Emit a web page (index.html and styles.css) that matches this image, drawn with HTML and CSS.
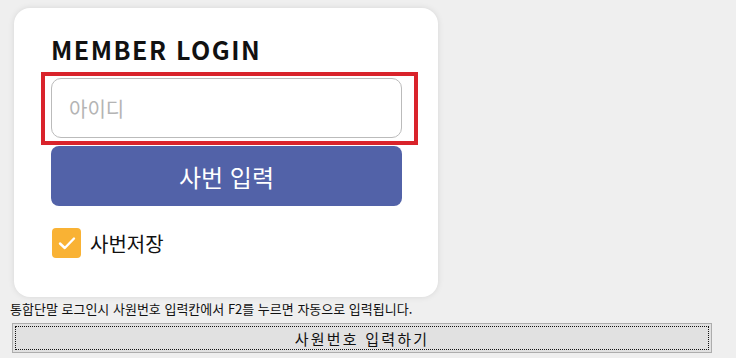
FILE: index.html
```html
<!DOCTYPE html>
<html lang="ko">

<head>
    <meta charset="UTF-8">
    <meta name="viewport" content="width=device-width, initial-scale=1.0">
    <title>Member Login</title>
    <link rel="stylesheet" href="styles.css">
</head>

<body>
    <!-- Login Card -->
    <div class="card">
        <h2 class="card-title">MEMBER LOGIN</h2>
        <div class="highlight">
            <input type="text" class="id-input" placeholder="아이디">
        </div>
        <button class="submit-btn">사번 입력</button>
        <label class="save-row">
            <span class="check-box">
                <svg width="18" height="14" viewBox="0 0 18 14">
                    <path d="M2 7.5 L6.8 12 L16 2.5" fill="none" stroke="#fff" stroke-width="2.4" stroke-linecap="round" stroke-linejoin="round" />
                </svg>
            </span>
            사번저장
        </label>
    </div>

    <p class="notice">통합단말 로그인시 사원번호 입력칸에서 F2를 누르면 자동으로 입력됩니다.</p>
    <button class="fill-btn">사원번호 입력하기</button>
</body>

</html>
```

FILE: styles.css
```css
body {
    font-family: "Noto Sans CJK KR", "Noto Sans", sans-serif;
    background-color: #efefef;
    margin: 0;
    padding: 0;
}

.card {
    background-color: #fff;
    border-radius: 16px;
    box-shadow: 0 0 6px rgba(0, 0, 0, 0.1);
    margin: 8px 0 0 14px;
    width: 424px;
    height: 289px;
    box-sizing: border-box;
    padding: 24px 36px 0 37px;
}

.card-title {
    font-size: 25px;
    font-weight: bold;
    letter-spacing: 1.5px;
    color: #111;
    margin: 0 0 6px;
    line-height: 34px;
}

/* red box around the id field */
.highlight {
    margin: 0 -16px 0 -10px;
    padding: 2px 12px 3px 6px;
    border: 4px solid #d9232b;
}

.id-input {
    display: block;
    width: 100%;
    height: 60px;
    box-sizing: border-box;
    border: 1px solid #bbb;
    border-radius: 10px;
    padding: 0 17px;
    font-family: inherit;
    font-size: 20px;
    color: #333;
}

.id-input::placeholder {
    color: #b4b4b4;
}

.submit-btn {
    display: block;
    width: 100%;
    height: 60px;
    margin-top: 1px;
    border: none;
    border-radius: 8px;
    background-color: #5262a8;
    color: #fff;
    font-family: inherit;
    font-size: 24px;
    cursor: pointer;
}

.save-row {
    display: flex;
    align-items: center;
    gap: 9px;
    margin-top: 22px;
    font-size: 20px;
    color: #111;
}

.check-box {
    display: flex;
    justify-content: center;
    align-items: center;
    width: 29px;
    height: 30px;
    margin-left: 1px;
    border-radius: 4px;
    background-color: #f9b234;
}

.notice {
    margin: 0 0 0 10px;
    font-size: 13px;
    line-height: 24px;
    color: #111;
}

.fill-btn {
    display: block;
    margin: 2px 0 0 12px;
    width: 700px;
    height: 30px;
    background-color: #e1e1e1;
    border: 1px solid #adadad;
    outline: 1px dotted #111;
    outline-offset: -4px;
    font-family: inherit;
    font-size: 15px;
    letter-spacing: 2.2px;
    color: #111;
    cursor: pointer;
}
```
